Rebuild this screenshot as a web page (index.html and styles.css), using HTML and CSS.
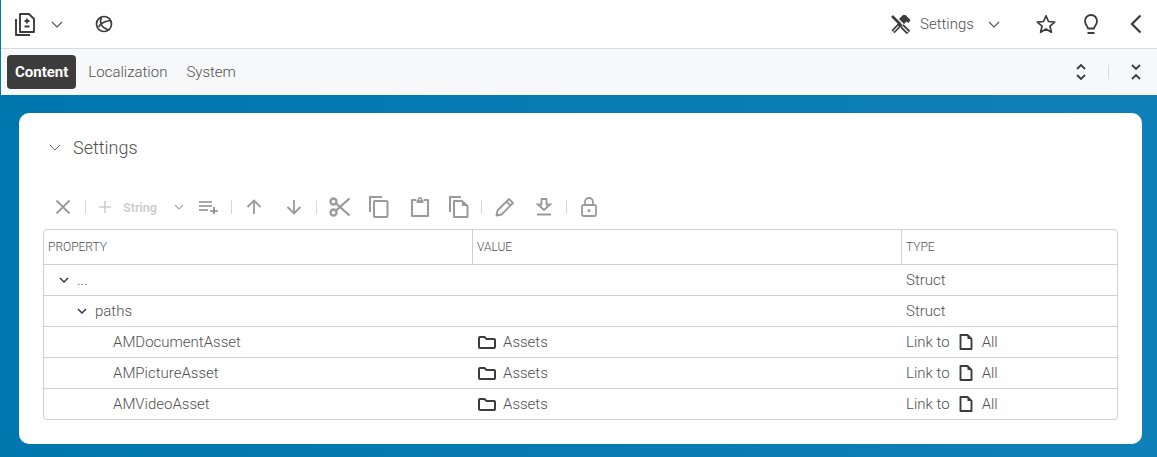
FILE: index.html
```html
<!DOCTYPE html>
<html lang="en">
<head>
<meta charset="utf-8">
<title>Settings</title>
<link rel="stylesheet" href="styles.css">
</head>
<body>
<div class="page">
  <header class="topbar">
    <div class="top-left">
      <svg class="ic doc-ic" viewBox="0 0 20 23"><path d="M5 1h9l5 5v13H5z" fill="none" stroke="#3c3c3c" stroke-width="1.900" stroke-linejoin="round"/><path d="M1 6v16h14" fill="none" stroke="#3c3c3c" stroke-width="1.900" stroke-linejoin="round"/><path d="M12 5.500v5M9.500 8h5M9.500 13.500h5" fill="none" stroke="#3c3c3c" stroke-width="1.800"/></svg>
      <svg class="chev top-chev" viewBox="0 0 12 7"><path d="M1 1l5 5 5-5" fill="none" stroke="#555" stroke-width="1.100"/></svg>
      <svg class="ic globe-ic" viewBox="0 0 18 18"><circle cx="9" cy="9" r="7.500" fill="none" stroke="#3c3c3c" stroke-width="1.700"/><path d="M6.500 2.500C4 7 6 13 14 15M3.500 12C6 8 10 6 15.500 5.500" fill="none" stroke="#3c3c3c" stroke-width="1.600"/></svg>
    </div>
    <div class="top-right">
      <svg class="ic tools-ic" viewBox="0 0 21 21"><path d="M2 2L10 10" stroke="#3c3c3c" stroke-width="2.600" fill="none"/><path d="M12 12L18.500 18.500" stroke="#3c3c3c" stroke-width="4.800" fill="none"/><path d="M12.500 12.500L18 18" stroke="#fff" stroke-width="1.100" fill="none"/><path d="M11 9.500L3 17.800" stroke="#3c3c3c" stroke-width="4.400" fill="none"/><path d="M8.500 12.200L3.500 17.300" stroke="#fff" stroke-width="1.100" fill="none"/><path d="M9 5L13 1h2.500l5 5-2 3-2-1.500L14 10l-3-3z" fill="#3c3c3c"/></svg>
      <span class="top-title">Settings</span>
      <svg class="chev settings-chev" viewBox="0 0 12 7"><path d="M1 1l5 5 5-5" fill="none" stroke="#555" stroke-width="1.100"/></svg>
      <svg class="ic star-ic" viewBox="0 0 20 20"><path d="M10 1.800l2.500 5.700 6.200.6-4.700 4.100 1.400 6.100L10 15.100l-5.400 3.200L6 12.200 1.300 8.100l6.200-.6z" fill="none" stroke="#3c3c3c" stroke-width="1.700" stroke-linejoin="round"/></svg>
      <svg class="ic bulb-ic" viewBox="0 0 18 22"><path d="M6 15.500c0-2-3-3.500-3-7.500a6 6 0 0 1 12 0c0 4-3 5.500-3 7.500z" fill="none" stroke="#3c3c3c" stroke-width="1.800" stroke-linejoin="round"/><path d="M5.500 20h7" stroke="#3c3c3c" stroke-width="2"/></svg>
      <svg class="ic back-ic" viewBox="0 0 12 20"><path d="M10.500 1.500L2 10l8.500 8.500" fill="none" stroke="#3c3c3c" stroke-width="2.200"/></svg>
    </div>
  </header>
  <nav class="tabbar">
    <div class="tabs">
      <span class="tab tab-active">Content</span>
      <span class="tab">Localization</span>
      <span class="tab">System</span>
    </div>
    <div class="tab-tools">
      <svg class="ic expand-ic" viewBox="0 0 10 16"><path d="M1 5l4-4 4 4M1 11l4 4 4-4" fill="none" stroke="#3c3c3c" stroke-width="1.800"/></svg>
      <span class="tool-sep"></span>
      <svg class="ic expand-ic" viewBox="0 0 10 16"><path d="M1 1l4 4 4-4M1 15l4-4 4 4" fill="none" stroke="#3c3c3c" stroke-width="1.800"/></svg>
    </div>
  </nav>
  <main class="stage">
    <section class="card">
      <div class="card-head">
        <svg class="chev head-chev" viewBox="0 0 12 7"><path d="M1 1l5 5 5-5" fill="none" stroke="#666" stroke-width="1"/></svg>
        <h2 class="card-title">Settings</h2>
      </div>
      <div class="toolbar">
        <svg class="tb tb-x" viewBox="0 0 16 16"><path d="M1.500 1.500l13 13M14.500 1.500l-13 13" fill="none" stroke="#9a9a9a" stroke-width="1.800"/></svg>
        <span class="sep"></span>
        <svg class="tb tb-plus" viewBox="0 0 14 14"><path d="M7 1v12M1 7h12" fill="none" stroke="#cfcfcf" stroke-width="1.600"/></svg>
        <span class="string-label">String</span>
        <svg class="chev tb-chev" viewBox="0 0 12 7"><path d="M2 1l4 4 4-4" fill="none" stroke="#a8a8a8" stroke-width="1.100"/></svg>
        <svg class="tb tb-list" viewBox="0 0 20 14"><path d="M0 2h13M0 6h13M0 10h9M11 11h8M15 7v7" fill="none" stroke="#8a8a8a" stroke-width="1.700"/></svg>
        <span class="sep"></span>
        <svg class="tb tb-arrow" viewBox="0 0 16 16"><path d="M8 15V2M1.500 8L8 1.500 14.500 8" fill="none" stroke="#9a9a9a" stroke-width="1.800"/></svg>
        <svg class="tb tb-arrow tb-down" viewBox="0 0 16 16"><path d="M8 1v13M1.500 8L8 14.500 14.500 8" fill="none" stroke="#9a9a9a" stroke-width="1.800"/></svg>
        <span class="sep"></span>
        <svg class="tb tb-cut" viewBox="0 0 22 20"><circle cx="4.500" cy="4.500" r="3" fill="none" stroke="#9a9a9a" stroke-width="2.300"/><circle cx="4.500" cy="15.500" r="3" fill="none" stroke="#9a9a9a" stroke-width="2.300"/><path d="M7 6.500L20.500 18.500M7 13.500L20.500 1.500" fill="none" stroke="#9a9a9a" stroke-width="2.300"/></svg>
        <svg class="tb tb-copy" viewBox="0 0 20 22"><path d="M1 16V1h12" fill="none" stroke="#9a9a9a" stroke-width="2"/><rect x="5" y="5" width="13.500" height="16" rx="1" fill="none" stroke="#9a9a9a" stroke-width="2"/></svg>
        <svg class="tb tb-paste" viewBox="0 0 20 20"><path d="M6 3H2v16h16V3h-4" fill="none" stroke="#9a9a9a" stroke-width="2" stroke-linejoin="round"/><path d="M6.500 2.500h7v3.500h-7z" fill="#9a9a9a"/><circle cx="10" cy="2" r="2" fill="#9a9a9a"/><circle cx="10" cy="2.500" r=".8" fill="#fff"/></svg>
        <svg class="tb tb-copy2" viewBox="0 0 20 22"><path d="M1 16V1h11" fill="none" stroke="#9a9a9a" stroke-width="2"/><path d="M5 5h8l5.500 5v11H5z" fill="none" stroke="#9a9a9a" stroke-width="2" stroke-linejoin="round"/><path d="M13 5v5h5.500" fill="#9a9a9a"/></svg>
        <span class="sep"></span>
        <svg class="tb tb-pen" viewBox="0 0 20 20"><path d="M1.500 18.500l1-5L14 2l4 4L6.500 17.500z M11.500 4.500l4 4" fill="none" stroke="#9a9a9a" stroke-width="1.800" stroke-linejoin="round"/></svg>
        <svg class="tb tb-save" viewBox="0 0 16 18"><path d="M5.500 1h5v5.500H14L8 12 2 6.500h3.500z" fill="none" stroke="#9a9a9a" stroke-width="1.800"/><path d="M1 16.500h14" stroke="#9a9a9a" stroke-width="2"/></svg>
        <span class="sep"></span>
        <svg class="tb tb-lock" viewBox="0 0 16 20"><rect x="1" y="8" width="14" height="11" rx="1.500" fill="none" stroke="#9a9a9a" stroke-width="1.800"/><path d="M4 8V5a4 4 0 0 1 8 0v3" fill="none" stroke="#9a9a9a" stroke-width="1.800"/><circle cx="8" cy="13.500" r="1.500" fill="#9a9a9a"/></svg>
      </div>
      <div class="grid">
        <div class="row head">
          <div class="cell">PROPERTY</div>
          <div class="cell">VALUE</div>
          <div class="cell">TYPE</div>
        </div>
        <div class="row">
          <div class="cell lvl0"><svg class="chev row-chev" viewBox="0 0 10 6"><path d="M1 1l4 4 4-4" fill="none" stroke="#3c3c3c" stroke-width="1.500"/></svg><span class="dots">...</span></div>
          <div class="cell"></div>
          <div class="cell">Struct</div>
        </div>
        <div class="row">
          <div class="cell lvl1"><svg class="chev row-chev" viewBox="0 0 10 6"><path d="M1 1l4 4 4-4" fill="none" stroke="#3c3c3c" stroke-width="1.500"/></svg>paths</div>
          <div class="cell"></div>
          <div class="cell">Struct</div>
        </div>
        <div class="row">
          <div class="cell lvl2">AMDocumentAsset</div>
          <div class="cell value"><svg class="folder" viewBox="0 0 18 13"><path d="M1 2a1 1 0 0 1 1-1h4.500l2 2H16a1 1 0 0 1 1 1v7a1 1 0 0 1-1 1H2a1 1 0 0 1-1-1z" fill="none" stroke="#3c3c3c" stroke-width="2"/></svg>Assets</div>
          <div class="cell type"><span>Link to</span><svg class="file" viewBox="0 0 14 16"><path d="M1.500 1h7l4 4v10h-11z" fill="none" stroke="#3c3c3c" stroke-width="1.900" stroke-linejoin="round"/><path d="M8.500 1v4h4" fill="#3c3c3c"/></svg><span>All</span></div>
        </div>
        <div class="row">
          <div class="cell lvl2">AMPictureAsset</div>
          <div class="cell value"><svg class="folder" viewBox="0 0 18 13"><path d="M1 2a1 1 0 0 1 1-1h4.500l2 2H16a1 1 0 0 1 1 1v7a1 1 0 0 1-1 1H2a1 1 0 0 1-1-1z" fill="none" stroke="#3c3c3c" stroke-width="2"/></svg>Assets</div>
          <div class="cell type"><span>Link to</span><svg class="file" viewBox="0 0 14 16"><path d="M1.500 1h7l4 4v10h-11z" fill="none" stroke="#3c3c3c" stroke-width="1.900" stroke-linejoin="round"/><path d="M8.500 1v4h4" fill="#3c3c3c"/></svg><span>All</span></div>
        </div>
        <div class="row">
          <div class="cell lvl2">AMVideoAsset</div>
          <div class="cell value"><svg class="folder" viewBox="0 0 18 13"><path d="M1 2a1 1 0 0 1 1-1h4.500l2 2H16a1 1 0 0 1 1 1v7a1 1 0 0 1-1 1H2a1 1 0 0 1-1-1z" fill="none" stroke="#3c3c3c" stroke-width="2"/></svg>Assets</div>
          <div class="cell type"><span>Link to</span><svg class="file" viewBox="0 0 14 16"><path d="M1.500 1h7l4 4v10h-11z" fill="none" stroke="#3c3c3c" stroke-width="1.900" stroke-linejoin="round"/><path d="M8.500 1v4h4" fill="#3c3c3c"/></svg><span>All</span></div>
        </div>
      </div>
    </section>
  </main>
</div>
</body>
</html>
```
FILE: styles.css
```css
* { box-sizing: border-box; }
html, body { margin: 0; height: 100%; overflow: hidden; }
body { font-family: Roboto, "Liberation Sans", sans-serif; font-size: 15px; font-weight: 300; color: #505050; }
.page { width: 1157px; height: 457px; display: flex; flex-direction: column; background: #fff; border-left: 1px solid #0078b0; }
svg { display: block; flex: none; }
.topbar { height: 49px; flex: none; display: flex; justify-content: space-between; align-items: center; background: #fff; border-bottom: 1px solid #d8dade; padding: 0 14px; }
.top-left, .top-right { display: flex; align-items: center; }
.doc-ic { width: 20px; height: 23px; }
.top-chev { width: 12px; height: 7px; margin-left: 16px; }
.globe-ic { width: 18px; height: 18px; margin-left: 32px; }
.tools-ic { width: 21px; height: 21px; }
.top-title { margin-left: 9px; font-size: 15px; font-weight: 300; color: #505050; width: 55px; }
.settings-chev { width: 12px; height: 7px; margin-left: 13px; }
.star-ic { width: 20px; height: 20px; margin-left: 36px; }
.bulb-ic { width: 18px; height: 22px; margin-left: 26px; }
.back-ic { width: 12px; height: 20px; margin-left: 30px; margin-right: 1px; }
.tabbar { height: 46px; flex: none; display: flex; justify-content: space-between; align-items: center; background: #f7f8fa; padding: 0 16px 0 6px; }
.tabs { display: flex; align-items: center; gap: 3px; }
.tab { padding: 0 8px; height: 34px; line-height: 34px; font-size: 15px; font-weight: 300; color: #505050; border-radius: 4px; }
.tab-active { background: #3c3c3c; color: #fff; font-weight: 700; margin-right: 1px; }
.tab-tools { display: flex; align-items: center; gap: 22px; }
.expand-ic { width: 10px; height: 16px; }
.tool-sep { width: 1px; height: 14px; background: #d8dade; }
.stage { flex: 1; background: linear-gradient(90deg, #0076ae, #1080b8); padding: 18px 15px 13px 18px; display: flex; }
.card { flex: 1; background: #fff; border-radius: 10px; padding: 0 24px; display: flex; flex-direction: column; }
.card-head { height: 69px; flex: none; display: flex; align-items: center; padding: 0 0 0 6px; }
.head-chev { width: 12px; height: 7px; }
.card-title { margin: 0 0 0 12px; font-size: 18px; font-weight: 300; color: #505050; }
.toolbar { height: 47px; flex: none; display: flex; align-items: center; padding: 3px 0 0 12px; }
.sep { width: 1px; height: 14px; background: #d8d8d8; flex: none; }
.tb-x { width: 16px; height: 16px; margin-right: 14px; }
.tb-plus { width: 14px; height: 14px; margin: 0 11px 0 12px; }
.string-label { font-size: 12.500px; font-weight: 700; color: #cfcfcf; width: 36px; }
.tb-chev { width: 12px; height: 7px; margin: 0 14px 0 14px; }
.tb-list { width: 20px; height: 14px; margin-right: 12px; }
.tb-arrow { width: 16px; height: 16px; margin-left: 14px; }
.tb-down { margin-left: 24px; margin-right: 14px; }
.tb-cut { width: 22px; height: 20px; margin-left: 12px; }
.tb-copy { width: 20px; height: 22px; margin-left: 18px; }
.tb-paste { width: 20px; height: 20px; margin-left: 21px; }
.tb-copy2 { width: 20px; height: 22px; margin-left: 19px; margin-right: 12px; }
.tb-pen { width: 20px; height: 20px; margin-left: 13px; }
.tb-save { width: 16px; height: 18px; margin-left: 21px; margin-right: 14px; }
.tb-lock { width: 16px; height: 20px; margin-left: 14px; }
.grid { border: 1px solid #d0d0d0; border-radius: 4px; display: flex; flex-direction: column; }
.row { display: grid; grid-template-columns: 428px 429px 1fr; height: 31px; border-top: 1px solid #d0d0d0; }
.row.head { height: 34px; border-top: 0; font-size: 12px; }
.cell { display: flex; align-items: center; padding-left: 4px; }
.row:not(.head) .cell:last-child { padding-left: 5px; }
.head .cell + .cell { border-left: 1px solid #d0d0d0; }
.row-chev { width: 10px; height: 6px; }
.lvl0 { padding-left: 15px; }
.lvl0 .row-chev { margin-right: 8px; }
.lvl1 { padding-left: 33px; }
.lvl1 .row-chev { margin-right: 8px; }
.lvl2 { padding-left: 69px; }
.value { padding-left: 6px; }
.folder { width: 18px; height: 13px; margin-right: 7px; }
.type { gap: 9px; }
.file { width: 14px; height: 16px; }
```
